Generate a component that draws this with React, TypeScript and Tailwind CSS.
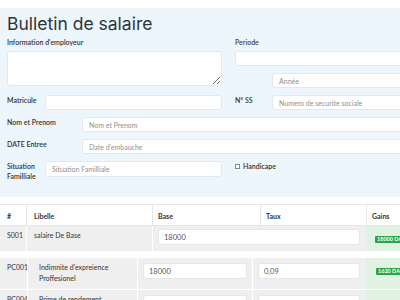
import React from "react";

const font = { fontFamily: "Lato, 'Open Sans', sans-serif" };

const Field = ({ placeholder, className }: { placeholder?: string; className?: string }) => (
  <input
    placeholder={placeholder}
    className={`h-[15px] bg-white border border-[#e4e8ec] rounded-[3px] pl-[6px] text-[7px] text-[#555] placeholder:text-[#8f8f8f] outline-none ${className ?? ""}`}
  />
);

const Badge = ({ value }: { value: string }) => (
  <span className="inline-block bg-[#28a745] text-white text-[5.5px] font-bold leading-[7px] px-[2px] rounded-[1px] whitespace-nowrap">
    {value}
  </span>
);

const CellInput = ({ value, className }: { value: string; className?: string }) => (
  <input
    defaultValue={value}
    className={`h-[16px] bg-white border border-[#e6e6e6] rounded-[3px] pl-[5px] text-[7.5px] text-[#555] outline-none ${className ?? ""}`}
  />
);

export default function App() {
  return (
    <div className="w-[400px] h-[300px] overflow-hidden bg-white" style={font}>
      <div className="w-[460px] pt-[8px]">
        {/* Form panel */}
        <section className="bg-[#eef6fd] pt-[3px] pb-[16px] px-[7px]">
          <h1
            className="text-[17.5px] leading-[26px] text-[#2f343a] font-normal"
            style={{ fontFamily: "Inter, Lato, sans-serif" }}
          >
            Bulletin de salaire
          </h1>

          <div className="flex gap-[13px]">
            <div className="w-[215px] flex flex-col">
              <label className="text-[7px] leading-[10px] font-semibold text-[#333] mb-[4px]">
                Information d'employeur
              </label>
              <textarea className="h-[35px] bg-white border border-[#e4e8ec] rounded-[3px] outline-none" />
            </div>
            <div className="flex-1 flex flex-col">
              <label className="text-[7px] leading-[10px] font-semibold text-[#444] mb-[4px]">Periode</label>
              <Field />
              <div className="flex mt-[7px] pl-[37px]">
                <Field placeholder="Année" className="flex-1" />
              </div>
            </div>
          </div>

          <div className="flex gap-[13px] mt-[7px]">
            <div className="w-[215px] flex">
              <span className="w-[38px] text-[7px] leading-[10px] font-semibold text-[#333]">Matricule</span>
              <Field className="flex-1" />
            </div>
            <div className="flex-1 flex">
              <span className="w-[37px] text-[7px] leading-[10px] font-semibold text-[#333]">N° SS</span>
              <Field placeholder="Numero de securite sociale" className="flex-1" />
            </div>
          </div>

          <div className="flex mt-[7px]">
            <span className="w-[75px] text-[7px] leading-[10px] font-semibold text-[#333]">Nom et Prenom</span>
            <Field placeholder="Nom et Prenom" className="flex-1" />
          </div>

          <div className="flex mt-[7px]">
            <span className="w-[75px] text-[7px] leading-[10px] font-semibold text-[#333]">DATE Entree</span>
            <Field placeholder="Date d'embauche" className="flex-1" />
          </div>

          <div className="flex gap-[13px] mt-[7px]">
            <div className="w-[215px] flex">
              <span className="w-[38px] text-[7px] leading-[10px] font-semibold text-[#333]">
                Situation Familliale
              </span>
              <Field placeholder="Situation Familliale" className="flex-1 h-[16px]" />
            </div>
            <div className="flex-1 flex items-center h-[10px] gap-[3px]">
              <span className="w-[5px] h-[5px] border border-[#888] bg-white" />
              <span className="text-[7px] leading-[10px] font-semibold text-[#333]">Handicape</span>
            </div>
          </div>
        </section>

        {/* Table header + base salary */}
        <div className="mt-[7px] text-[7px] text-[#333]">
          <div className="grid grid-cols-[26px_126px_108px_106px_1fr] h-[22px] border-y border-[#e6e6e6] font-bold">
            <div className="pl-[7px] pt-[6px]">#</div>
            <div className="pl-[7px] pt-[6px] border-l border-[#e6e6e6]">Libelle</div>
            <div className="pl-[5px] pt-[6px] border-l border-[#e6e6e6]">Base</div>
            <div className="pl-[5px] pt-[6px] border-l border-[#e6e6e6]">Taux</div>
            <div className="pl-[5px] pt-[6px] border-l border-[#e6e6e6]">Gains</div>
          </div>
          <div className="grid grid-cols-[26px_126px_214px_1fr] h-[25px] bg-[#efefef]">
            <div className="pl-[7px] pt-[4px] leading-[10px]">S001</div>
            <div className="pl-[7px] pt-[4px] leading-[10px] border-l border-white">salaire De Base</div>
            <div className="pl-[5px] pr-[6px] pt-[3px] border-l border-white flex">
              <CellInput value="18000" className="flex-1" />
            </div>
            <div className="bg-[#e2f2e2] pl-[9px] pt-[7px]">
              <Badge value="18000 DA" />
            </div>
          </div>

          {/* Primes */}
          <div className="mt-[7px]">
            <div className="grid grid-cols-[27px_110px_115px_114px_1fr] h-[32px] bg-[#efefef] border-b border-white">
              <div className="pl-[7px] pt-[4px] leading-[10px]">PC001</div>
              <div className="pl-[11px] pt-[4px] leading-[11px] border-l border-white">
                Indimnite d'expreience Proffesionel
              </div>
              <div className="px-[5px] pt-[5px] border-l border-white flex items-start">
                <CellInput value="18000" className="flex-1 min-w-0" />
              </div>
              <div className="pl-[5px] pr-[6px] pt-[5px] border-l border-white flex items-start">
                <CellInput value="0,09" className="flex-1 min-w-0" />
              </div>
              <div className="bg-[#e2f2e2] pl-[10px] pt-[7px]">
                <Badge value="1620 DA" />
              </div>
            </div>
            <div className="grid grid-cols-[27px_110px_115px_114px_1fr] h-[32px] bg-[#efefef]">
              <div className="pl-[7px] pt-[4px] leading-[10px]">PC004</div>
              <div className="pl-[11px] pt-[4px] leading-[11px] border-l border-white">Prime de rendement</div>
              <div className="px-[5px] pt-[5px] border-l border-white flex items-start">
                <CellInput value="18000" className="flex-1 min-w-0" />
              </div>
              <div className="pl-[5px] pr-[6px] pt-[5px] border-l border-white flex items-start">
                <CellInput value="0,09" className="flex-1 min-w-0" />
              </div>
              <div className="bg-[#e2f2e2] pl-[10px] pt-[7px]">
                <Badge value="1620 DA" />
              </div>
            </div>
          </div>
        </div>
      </div>
    </div>
  );
}
